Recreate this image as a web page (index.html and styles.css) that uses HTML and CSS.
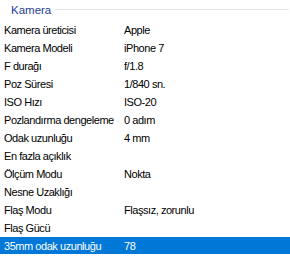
FILE: index.html
```html
<!DOCTYPE html>
<html>
<head>
<meta charset="utf-8">
<link rel="stylesheet" href="styles.css">
</head>
<body>
<div class="list">
  <div class="group">
    <span class="group-title">Kamera</span>
    <span class="group-line"></span>
  </div>
  <div class="rows">
    <div class="row"><span class="label">Kamera üreticisi</span><span class="value">Apple</span></div>
    <div class="row"><span class="label">Kamera Modeli</span><span class="value">iPhone 7</span></div>
    <div class="row"><span class="label">F durağı</span><span class="value">f/1.8</span></div>
    <div class="row"><span class="label">Poz Süresi</span><span class="value">1/840 sn.</span></div>
    <div class="row"><span class="label">ISO Hızı</span><span class="value">ISO-20</span></div>
    <div class="row"><span class="label">Pozlandırma dengeleme</span><span class="value">0 adım</span></div>
    <div class="row"><span class="label">Odak uzunluğu</span><span class="value">4 mm</span></div>
    <div class="row"><span class="label">En fazla açıklık</span><span class="value"></span></div>
    <div class="row"><span class="label">Ölçüm Modu</span><span class="value">Nokta</span></div>
    <div class="row"><span class="label">Nesne Uzaklığı</span><span class="value"></span></div>
    <div class="row"><span class="label">Flaş Modu</span><span class="value">Flaşsız, zorunlu</span></div>
    <div class="row"><span class="label">Flaş Gücü</span><span class="value"></span></div>
    <div class="row selected"><span class="label">35mm odak uzunluğu</span><span class="value">78</span></div>
  </div>
</div>
</body>
</html>
```
FILE: styles.css
```css
html, body {
  margin: 0;
  padding: 0;
  background: #ffffff;
}
.list {
  width: 290px;
  height: 262px;
  font-family: "Liberation Sans", Arial, sans-serif;
  font-size: 11px;
  letter-spacing: -0.45px;
  color: #000000;
  overflow: hidden;
}
.group {
  display: flex;
  align-items: center;
  height: 21px;
  padding-left: 11px;
  box-sizing: border-box;
  padding-bottom: 2px;
}
.group-title {
  color: #1e3d96;
  font-size: 11.5px;
  letter-spacing: 0;
  margin-right: 4px;
}
.group-line {
  flex: 1;
  height: 1px;
  background: #e0e5eb;
  margin-right: 1px;
}
.rows {
  display: flex;
  flex-direction: column;
  gap: 1px;
}
.row {
  display: flex;
  align-items: center;
  height: 17px;
}
.label {
  width: 120px;
  flex: none;
  padding-left: 4px;
  white-space: nowrap;
}
.value {
  white-space: nowrap;
}
.row.selected {
  background: #0078d7;
  color: #ffffff;
}
```
